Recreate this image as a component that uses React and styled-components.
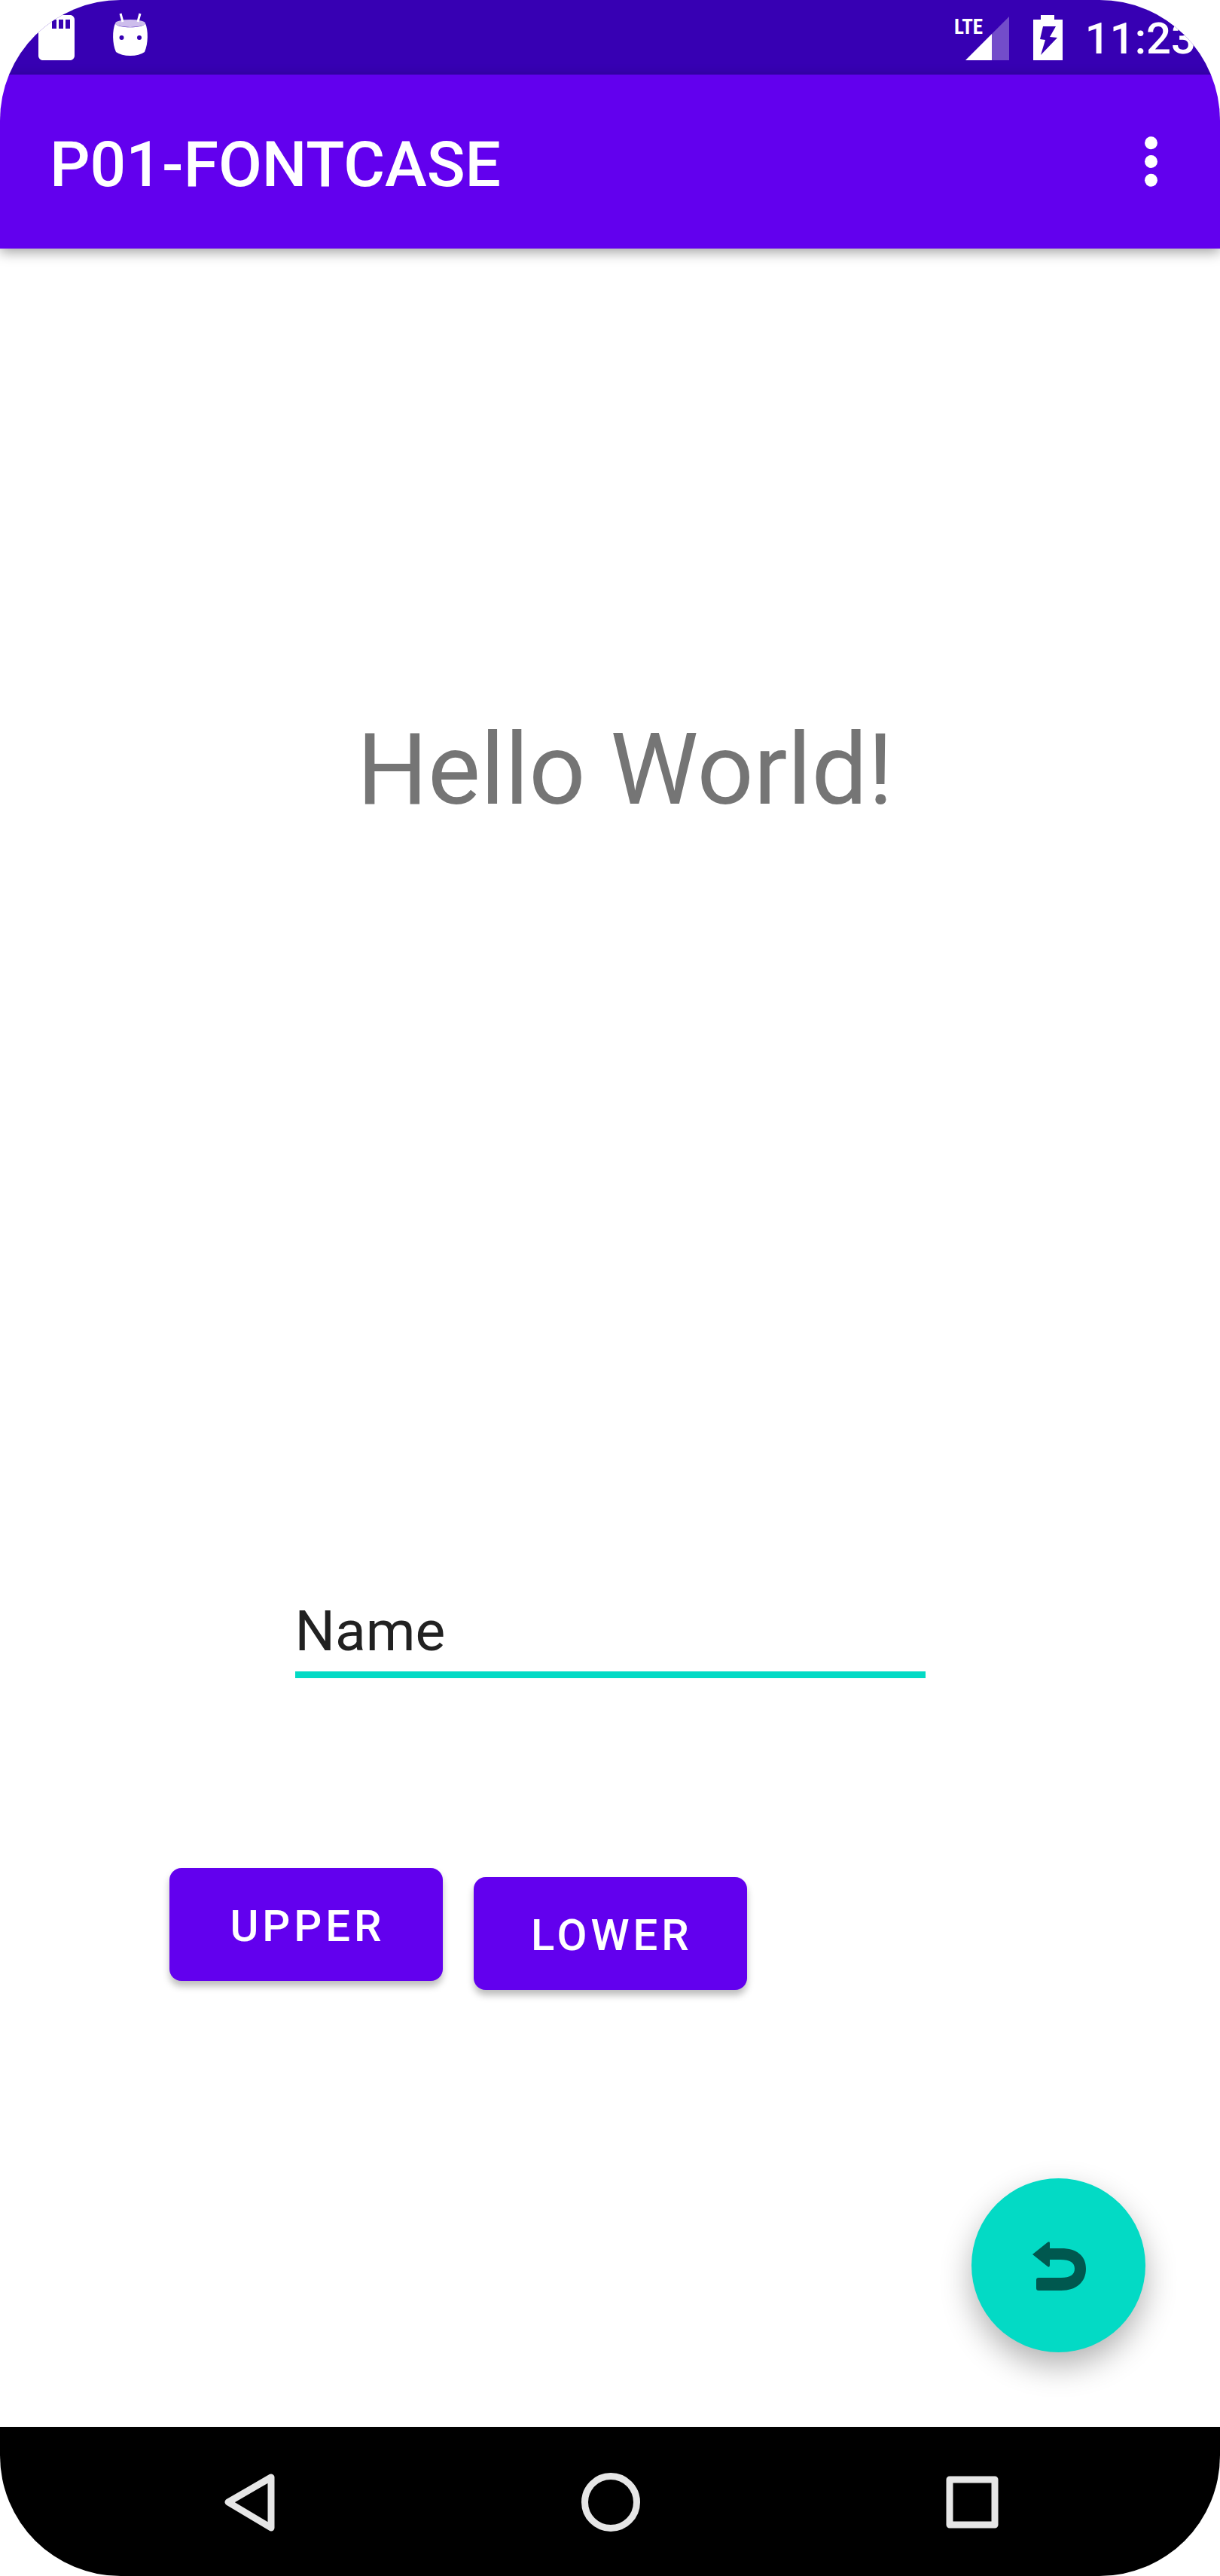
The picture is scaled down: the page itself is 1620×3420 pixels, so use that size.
import React, { useState } from "react";
import styled, { createGlobalStyle } from "styled-components";

const GlobalStyle = createGlobalStyle`
  *, *::before, *::after {
    box-sizing: border-box;
  }
  body {
    margin: 0;
    background: #ffffff;
    font-family: Roboto, "Liberation Sans", sans-serif;
  }
  button {
    border: 0;
    padding: 0;
    background: none;
    color: inherit;
    font-family: inherit;
    cursor: pointer;
  }
`;

const Screen = styled.div`
  display: flex;
  flex-direction: column;
  min-height: 100vh;
  border-radius: 160px;
  overflow: hidden;
  background: #ffffff;
`;

const StatusBar = styled.header`
  display: flex;
  align-items: center;
  justify-content: space-between;
  height: 99px;
  padding: 0 32px 0 39px;
  background: #3700b3;
  color: #ffffff;
`;

const StatusGroup = styled.div`
  display: flex;
  align-items: center;
  gap: ${(p) => p.$gap}px;
`;

const Icon = styled.svg`
  display: block;
  flex: none;
  width: ${(p) => p.$size}px;
  height: ${(p) => p.$size}px;
  overflow: visible;
`;

const NetworkLabel = styled.text`
  font-family: "Roboto Condensed", "Liberation Sans Narrow", Roboto, sans-serif;
  font-size: 27px;
  font-weight: 700;
  fill: #ffffff;
`;

const Clock = styled.time`
  padding-top: 2px;
  font-size: 58px;
  line-height: 68px;
  font-weight: 500;
`;

const AppBar = styled.div`
  position: relative;
  display: flex;
  align-items: center;
  justify-content: space-between;
  height: 231px;
  padding: 0 42px 0 66px;
  background: #6200ee;
  color: #ffffff;
  box-shadow: 0 5px 16px rgba(0, 0, 0, 0.36);
`;

const Title = styled.h1`
  margin: 0;
  padding-top: 8px;
  font-size: 84px;
  line-height: 98px;
  font-weight: 500;
`;

const Content = styled.main`
  flex: 1;
  display: flex;
  flex-direction: column;
  padding: 615px 99px 99px;
`;

const Greeting = styled.p`
  margin: 0 0 1021px;
  padding-left: 40px;
  text-align: center;
  font-size: 132px;
  line-height: 155px;
  color: #757575;
`;

const NameField = styled.input`
  align-self: center;
  width: 837px;
  max-width: 100%;
  height: 107px;
  margin-bottom: 252px;
  padding: 0 0 11px;
  border: 0;
  border-bottom: 9px solid #03dac5;
  border-radius: 0;
  outline: 0;
  background: transparent;
  color: #212121;
  font-family: inherit;
  font-size: 75px;
`;

const CaseActions = styled.div`
  display: flex;
  gap: 41px;
  height: 162px;
  padding-left: 126px;
`;

const CaseButton = styled.button`
  align-self: ${(p) => p.$align};
  width: 363px;
  height: 150px;
  padding: 4px 0 0 4px;
  border-radius: 16px;
  background: #6200ee;
  color: #ffffff;
  font-size: 58px;
  font-weight: 500;
  letter-spacing: 5px;
  box-shadow: 0 7px 10px rgba(0, 0, 0, 0.26);
`;

const Fab = styled.button`
  display: grid;
  place-items: center;
  align-self: flex-end;
  width: 231px;
  height: 231px;
  margin-top: auto;
  border-radius: 50%;
  background: #03dac5;
  box-shadow: 0 18px 42px rgba(0, 0, 0, 0.3);
`;

const NavBar = styled.nav`
  display: flex;
  height: 198px;
  padding: 0 90px;
  background: #000000;
`;

const NavButton = styled.button`
  flex: 1;
  display: grid;
  place-items: center;
`;

function SdCardIcon() {
  return (
    <Icon $size={72} viewBox="0 0 24 24" aria-hidden="true">
      <path
        fill="#fff"
        d="M18 2h-8L4 8v12c0 1.1.9 2 2 2h12c1.1 0 2-.9 2-2V4c0-1.1-.9-2-2-2zm-6 6h-2V4h2v4zm3 0h-2V4h2v4zm3 0h-2V4h2v4z"
      />
    </Icon>
  );
}

function DroidIcon() {
  return (
    <Icon $size={72} viewBox="0 0 72 72" aria-hidden="true">
      <path
        fill="#fff"
        d="M16 17C12 26 12 44 17 55Q24 60 36 60T55 55C60 44 60 26 56 17C54 24 18 24 16 17Z"
      />
      <ellipse cx="36" cy="17" rx="20" ry="5" fill="#cdbdec" />
      <path d="M23 4l3 11M49 4l-3 11" stroke="#fff" strokeWidth="3" fill="none" />
      <circle cx="24.500" cy="36" r="3" fill="#3700b3" />
      <circle cx="48" cy="36" r="3" fill="#3700b3" />
    </Icon>
  );
}

function SignalIcon() {
  return (
    <Icon $size={72} viewBox="0 0 72 72" role="img" aria-label="LTE signal">
      <path fill="#fff" d="M15 66L50 31V66Z" />
      <path fill="#fff" fillOpacity="0.3" d="M50 31L73 8V66H50Z" />
      <NetworkLabel x="0" y="31">LTE</NetworkLabel>
    </Icon>
  );
}

function BatteryIcon() {
  return (
    <Icon $size={72} viewBox="0 0 72 72" role="img" aria-label="Battery charging">
      <path fill="#fff" d="M28 6H46V12H57V66H18V12H28Z" />
      <path fill="#3700b3" d="M31 21H48L40 35L50 36L28 59L34 39L27 38Z" />
    </Icon>
  );
}

function MoreIcon() {
  return (
    <Icon $size={99} viewBox="0 0 24 24" aria-hidden="true">
      <g fill="#fff">
        <circle cx="12" cy="6" r="2.050" />
        <circle cx="12" cy="12" r="2.050" />
        <circle cx="12" cy="18" r="2.050" />
      </g>
    </Icon>
  );
}

function RevertIcon() {
  return (
    <Icon $size={99} viewBox="0 0 99 99" aria-hidden="true">
      <path
        fill="#00584f"
        d="M15 35L35 19Q38 17 38 20V27H53C74 27 86 37 86 54C86 72 73 83 53 83H23Q20 83 20 80V69Q20 66 23 66H53C65 66 71 62 71 54C71 46 65 42 52 42H38V49Q38 53 35 51Z"
      />
    </Icon>
  );
}

function BackIcon() {
  return (
    <Icon $size={99} viewBox="0 0 99 99" aria-hidden="true">
      <path
        d="M22 50L79 17V84Z"
        fill="none"
        stroke="#e6e6e6"
        strokeWidth="9"
        strokeLinejoin="round"
      />
    </Icon>
  );
}

function HomeIcon() {
  return (
    <Icon $size={99} viewBox="0 0 99 99" aria-hidden="true">
      <circle cx="50" cy="50" r="34.500" fill="none" stroke="#e6e6e6" strokeWidth="9" />
    </Icon>
  );
}

function RecentsIcon() {
  return (
    <Icon $size={99} viewBox="0 0 99 99" aria-hidden="true">
      <rect
        x="20"
        y="20"
        width="60"
        height="60"
        fill="none"
        stroke="#e6e6e6"
        strokeWidth="9"
        strokeLinejoin="round"
      />
    </Icon>
  );
}

const GREETING = "Hello World!";

export default function App() {
  const [greeting, setGreeting] = useState(GREETING);
  const [name, setName] = useState("Name");

  return (
    <>
      <GlobalStyle />
      <Screen>
        <StatusBar>
          <StatusGroup $gap={26}>
            <SdCardIcon />
            <DroidIcon />
          </StatusGroup>
          <StatusGroup $gap={15}>
            <SignalIcon />
            <BatteryIcon />
            <Clock>11:23</Clock>
          </StatusGroup>
        </StatusBar>
        <AppBar>
          <Title>P01-FONTCASE</Title>
          <button type="button" aria-label="More options">
            <MoreIcon />
          </button>
        </AppBar>
        <Content>
          <Greeting>{greeting}</Greeting>
          <NameField
            type="text"
            aria-label="Name"
            value={name}
            onChange={(e) => setName(e.target.value)}
          />
          <CaseActions>
            <CaseButton
              type="button"
              $align="flex-start"
              onClick={() => setGreeting(greeting.toUpperCase())}
            >
              UPPER
            </CaseButton>
            <CaseButton
              type="button"
              $align="flex-end"
              onClick={() => setGreeting(greeting.toLowerCase())}
            >
              LOWER
            </CaseButton>
          </CaseActions>
          <Fab type="button" aria-label="Revert" onClick={() => setGreeting(GREETING)}>
            <RevertIcon />
          </Fab>
        </Content>
        <NavBar>
          <NavButton type="button" aria-label="Back">
            <BackIcon />
          </NavButton>
          <NavButton type="button" aria-label="Home">
            <HomeIcon />
          </NavButton>
          <NavButton type="button" aria-label="Recent apps">
            <RecentsIcon />
          </NavButton>
        </NavBar>
      </Screen>
    </>
  );
}
